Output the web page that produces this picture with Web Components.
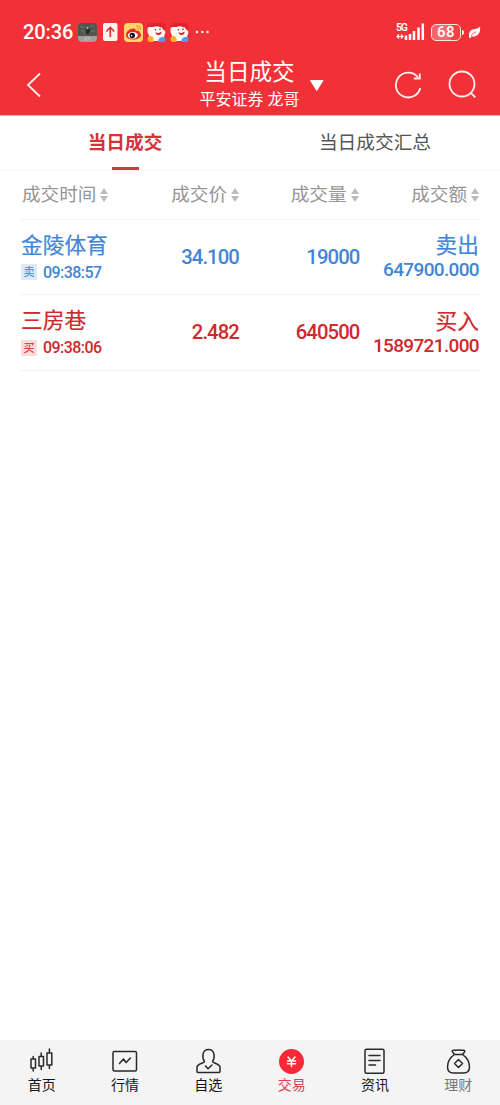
<!DOCTYPE html>
<html lang="zh-CN">
<head>
<meta charset="utf-8">
<meta name="viewport" content="width=device-width, initial-scale=1">
<title>当日成交</title>
<style>
    body {
        margin: 0;
        background: #fff;
        font-family: Roboto, "Noto Sans CJK SC", sans-serif;
        --brand: #f23038;
        --buy: #d0282d;
        --sell: #4285d6;
    }
</style>
</head>
<body>
<trade-app></trade-app>

<script>
class StatusBar extends HTMLElement {
    connectedCallback() {
        this.attachShadow({ mode: 'open' }).innerHTML = `
        <style>
            :host {
                display: flex;
                align-items: center;
                box-sizing: border-box;
                height: 55px;
                padding: 9px 19px 0 23px;
                color: #fff;
            }
            time { font: 500 20px/24px Roboto, sans-serif; width: 55px; letter-spacing: -.1px; white-space: nowrap; }
            .apps { display: flex; align-items: center; gap: 4px; flex: 1; }
            svg { display: block; flex: none; }
            .signal { margin-right: 6px; }
            .battery {
                display: flex;
                align-items: center;
                justify-content: center;
                box-sizing: border-box;
                width: 30px;
                height: 17px;
                border: 1.5px solid #ffe5df;
                border-radius: 5px;
                background: linear-gradient(90deg, #f5676c 68%, #f34047 68%);
                font: 500 15px/15px Roboto, sans-serif;
                letter-spacing: .5px;
            }
            .nub { width: 2px; height: 5px; margin: 0 4px 0 1px; border-radius: 0 2px 2px 0; background: #ffe5df; }
        </style>
        <time>20:36</time>
        <div class="apps">
            <svg width="19" height="19" viewBox="0 0 19 19">
                <rect width="19" height="19" rx="4" fill="#4f5650"/>
                <path d="M0 13h19v2a4 4 0 0 1-4 4H4a4 4 0 0 1-4-4z" fill="#a3a09a"/>
                <path d="M2 4h4M12 3h4M3 8h3M13 8h4M5 11h2" stroke="#66705f" stroke-width="1.5"/>
                <path d="M9.5 4v7M8 7h4" stroke="#252928" stroke-width="3"/>
                <circle cx="9.5" cy="5" r="1.2" fill="#aaa"/>
                <path d="M8 14v4M11 14v2" stroke="#d2ceca"/>
            </svg>
            <svg width="19" height="19" viewBox="0 0 19 19">
                <rect x="2" y="0" width="14.500" height="18" rx="2" fill="#fff3ee"/>
                <path d="M9.300 14V4.500M5.300 8.500l4-4 4 4" fill="none" stroke="#d8323a" stroke-width="1.7"/>
            </svg>
            <svg width="19" height="19" viewBox="0 0 19 19">
                <rect width="19" height="19" rx="4" fill="#ffd66c"/>
                <path d="M2 12c0-4 5-7 8-6.500 2 .3 1.300 2 1.800 2.200 1 .1 3.500-.4 3.700 1.300.1.800 1.500 1.300 1.500 3 0 3-4 4.500-7.500 4.500S2 15.500 2 12z" fill="#df2d23"/>
                <ellipse cx="8.800" cy="12.300" rx="5" ry="3.400" fill="#fff"/>
                <circle cx="8.300" cy="12.500" r="2.700" fill="#171717"/>
                <circle cx="7.600" cy="12.800" r=".8" fill="#fff"/>
                <path d="M12 3c3-.8 5 1.500 4.300 4M12.500 5.300c1.500-.3 2 .4 1.700 1.500" fill="none" stroke="#f29a2d" stroke-width="1.200"/>
            </svg>
            <svg id="joy" width="19" height="19" viewBox="0 0 19 19">
                <rect width="19" height="19" rx="4" fill="#e9222e"/>
                <path d="M.5 5c2-2 4.500 0 6.500-1.500 4-2 8 0 9 3 1.500.5 2.500 1.500 2.500 3L17 14l-1 4H3l-1-5L.5 9z" fill="#fff8f3"/>
                <path d="M5 2.500c3-2.500 7-2.500 10 0L14 4.500C11 3 8 3 6 4z" fill="#e51d2b"/>
                <path d="M8.500 9c2 1.500 4 1 6-.5.5 2.500-1.500 4-3.500 3.500-1.500 0-2.500-1.500-2.500-3z" fill="#d72a32"/>
                <circle cx="8.500" cy="6.800" r=".8" fill="#333"/><circle cx="13" cy="6.300" r=".8" fill="#333"/>
                <path d="M.5 14.500c2-2.500 5-1.500 6 .5v4H3.500a3 3 0 0 1-3-2z" fill="#ffae31"/>
                <path d="M11.500 19c-1-3.500 2.500-6 7-4.500V16a3 3 0 0 1-3 3z" fill="#569be8"/>
            </svg>
            <svg width="18" height="5" viewBox="0 0 18 5" fill="#ffe9e5">
                <circle cx="4" cy="2" r="1.300"/><circle cx="9.300" cy="2" r="1.300"/><circle cx="14.500" cy="2" r="1.300"/>
            </svg>
        </div>
        <svg class="signal" width="29" height="20" viewBox="0 0 29 20">
            <text x="0" y="8.500" font-family="Roboto, sans-serif" font-size="10.500" font-weight="600" fill="#fff" textLength="12">5G</text>
            <path d="M1 14.500h6M3 12.500l-2 2 2 2M5 12.500l2 2-2 2" fill="none" stroke="#fff" stroke-width="1.200"/>
            <path d="M10 13.500v4.500M14 12v6M18 9v9M22.500 5.500V18M26.800 1.500V18" stroke="#fff" stroke-width="2.500"/>
        </svg>
        <div class="battery">68</div><div class="nub"></div>
        <svg width="13" height="13" viewBox="0 0 13 13">
            <path d="M1 11C.5 5 3 3.500 7 3c2-.3 3.500-1 5-2.500C13 6 10 11.500 3.500 10.500L1.500 12.500z" fill="#fff"/>
            <path d="M3 10c1-2 3-3.500 5-4.200" fill="none" stroke="#f23038" stroke-width=".8"/>
        </svg>`;

        // Two notifications come from the same shopping app
        const joy = this.shadowRoot.getElementById('joy');
        const copy = joy.cloneNode(true);
        copy.removeAttribute('id');
        joy.after(copy);
    }
}

class TitleBar extends HTMLElement {
    connectedCallback() {
        this.attachShadow({ mode: 'open' }).innerHTML = `
        <style>
            :host {
                display: grid;
                grid-template-columns: 1fr 102px 1fr;
                align-items: start;
                box-sizing: border-box;
                height: 60px;
                color: #fff;
            }
            .center { text-align: center; padding-top: 2px; margin-left: -1px; }
            ::slotted([slot="title"]) { font-size: 22.600px; line-height: 32px; }
            ::slotted([slot="account"]) { font-size: 16px; line-height: 22px; white-space: pre; }
            svg { display: block; fill: none; stroke: #fff2ed; stroke-width: 1.8; }
            .back { margin: 17px 0 0 26px; }
            .right { display: flex; align-items: flex-start; }
            .caret { fill: #fff; stroke: none; margin: 24px 0 0 8px; }
            .refresh { margin: 15px 0 0 70px; }
            .search { margin: 15px 0 0 25px; }
        </style>
        <svg class="back" width="16" height="26" viewBox="0 0 16 26"><path d="M14 1.500 2 13l12 11.500"/></svg>
        <div class="center"><slot name="title"></slot><slot name="account"></slot></div>
        <div class="right">
            <svg class="caret" width="15" height="13" viewBox="0 0 15 13"><path d="M1.500 1.500h12.500L7.800 11.500z" stroke="#fff" stroke-width="1" stroke-linejoin="round"/></svg>
            <svg class="refresh" width="29" height="29" viewBox="0 0 29 29">
                <path d="M26.300 18a12.400 12.400 0 1 1-2.200-10.500"/>
                <path d="M25.800 3.500v5h-6"/>
            </svg>
            <svg class="search" width="29" height="29" viewBox="0 0 29 29"><circle cx="14" cy="14" r="12.500"/><path d="m22.800 22.800 4.500 4.500"/></svg>
        </div>`;
    }
}

class TabItem extends HTMLElement {
    connectedCallback() {
        this.attachShadow({ mode: 'open' }).innerHTML = `
        <style>
            :host {
                display: flex;
                flex-direction: column;
                align-items: center;
                justify-content: space-between;
                flex: 1;
                color: #555;
                font-size: 18.700px;
                line-height: 54px;
            }
            :host([active]) { color: #d2343a; font-weight: 600; }
            .label { height: 51px; }
            .bar { width: 27px; height: 3px; }
            :host([active]) .bar { background: #cd3a40; }
        </style>
        <div class="label"><slot></slot></div>
        <div class="bar"></div>`;
    }
}

class SortHeader extends HTMLElement {
    connectedCallback() {
        this.attachShadow({ mode: 'open' }).innerHTML = `
        <style>
            :host {
                display: flex;
                align-items: center;
                justify-content: flex-end;
                gap: 4px;
                color: #959595;
                font-size: 18.600px;
                line-height: 48px;
                white-space: nowrap;
            }
            :host([start]) { justify-content: flex-start; }
            svg { display: block; margin-top: -1px; }
        </style>
        <slot></slot>
        <svg width="8" height="14" viewBox="0 0 8 14" fill="#bcbcbc"><path d="M4 0l4 6H0zM4 14l4-6H0z"/></svg>`;
    }
}

class TradeRow extends HTMLElement {
    connectedCallback() {
        const get = (name) => this.getAttribute(name) || '';
        const sell = get('side') === 'sell';

        this.attachShadow({ mode: 'open' }).innerHTML = `
        <style>
            :host {
                display: grid;
                grid-template-columns: 130px 88px 120.500px 1fr;
                box-sizing: border-box;
                height: 75.500px;
                margin: 0 20px;
                padding: 0 1px;
                border-bottom: 1px solid #f3f3f3;
                color: var(--${sell ? 'sell' : 'buy'});
                white-space: nowrap;
            }
            .name { font-size: 21.700px; line-height: 32px; margin-top: 10px; -webkit-text-stroke: .2px; }
            .meta { display: flex; align-items: center; gap: 6px; height: 21px; }
            .tag {
                width: 16px;
                height: 16px;
                font-size: 11.500px;
                line-height: 16px;
                text-align: center;
                background: ${sell ? '#dcebfb' : '#fbdcdc'};
            }
            .time { font-size: 16px; font-weight: 500; letter-spacing: -.550px; }
            .num { font-size: 20.300px; font-weight: 500; letter-spacing: -.900px; line-height: 74px; text-align: right; }
            .total { text-align: right; }
            .side { font-size: 21.700px; line-height: 28px; margin-top: 12.500px; -webkit-text-stroke: .2px; }
            .amount { font-size: 19px; font-weight: 500; letter-spacing: -.650px; line-height: 20.500px; margin-left: -20px; }
        </style>
        <div>
            <div class="name">${get('name')}</div>
            <div class="meta"><span class="tag">${sell ? '卖' : '买'}</span><span class="time">${get('time')}</span></div>
        </div>
        <div class="num">${get('price')}</div>
        <div class="num">${get('volume')}</div>
        <div class="total">
            <div class="side">${sell ? '卖出' : '买入'}</div>
            <div class="amount">${get('amount')}</div>
        </div>`;
    }
}

const NAV_ICONS = {
    home: '<path d="M3 11h4.500v9H3zM3 11h4.500M5.200 8.500V11M5.200 20v3M11 8.500h4.500V18H11zM13.200 5v3.500M13.200 18v3.500M19 5h4.800v12H19zM21.400 1v4M21.400 17v3.500"/>',
    market: '<rect x="2" y="3.500" width="23.500" height="19.500" rx="1.500"/><path d="m8.500 15.500 4-4.500 2.500 3.500 4.500-4.500"/>',
    watch: '<path d="M9.500 13.500C7.800 11.500 7.500 9 8 6.500 8.500 3 10.500 1.500 13.500 1.500S18.500 3 19 6.500c.5 2.500.2 5-1.500 7 0 1.500 7.500 2.300 7.500 5.500v4.500c0 .700-.3 1-1 1H3c-.7 0-1-.3-1-1V19c0-3.200 7.500-4 7.500-5.500z"/><path d="m10.500 18 2.500 2.800 4-3.800"/>',
    trade: '<circle cx="13.500" cy="13.500" r="12.500" fill="#fa2938" stroke="none"/><path d="m10 9 3.500 4L17 9M9.500 13h8M9.500 15.800h8M13.500 13v5.500" stroke="#fff"/>',
    news: '<rect x="4" y="1.300" width="19" height="24" rx="1.500"/><path d="M8 7.500h11M8 12.500h11M8 17h6.500"/>',
    wealth: '<path d="M9.500 6.500 7.500 4c-.8-1.300.2-1.800 1.300-1.700 1.700.2 2.700-.3 4.700-.3s3 .5 4.700.3c1.100-.1 2.100.4 1.300 1.700l-2 2.500zM9.500 6.500C5 9.500 2.500 14 2.500 19c0 4 2 6 6 6h10c4 0 6-2 6-6 0-5-2.500-9.500-7-12.500z"/><path d="m13.500 11.500 4 4-4 4-4-4z"/>'
};

class NavItem extends HTMLElement {
    connectedCallback() {
        this.attachShadow({ mode: 'open' }).innerHTML = `
        <style>
            :host {
                display: flex;
                flex-direction: column;
                align-items: center;
                flex: 1;
                padding-top: 8px;
                color: #161616;
                font-size: 14px;
                line-height: 20px;
            }
            :host([active]) { color: #df3f50; }
            :host([muted]) { color: #777; }
            svg {
                display: block;
                fill: none;
                stroke: #292929;
                stroke-width: 1.500;
                stroke-linejoin: round;
                stroke-linecap: round;
            }
        </style>
        <svg width="27" height="27" viewBox="0 0 27 27">${NAV_ICONS[this.getAttribute('icon')]}</svg>
        <slot></slot>`;
    }
}

class TradeApp extends HTMLElement {
    connectedCallback() {
        this.attachShadow({ mode: 'open' }).innerHTML = `
        <style>
            :host { display: flex; flex-direction: column; height: 1105px; }
            header { background: var(--brand); border-bottom: 1px solid #ffaaaa; }
            .tabs { display: flex; height: 54px; border-bottom: 1px solid #f5f5f5; }
            .columns {
                display: grid;
                grid-template-columns: 129.500px 87.500px 119.500px 1fr;
                height: 47.500px;
                margin: 0 20px;
                padding: 0 1px 0 2px;
                border-bottom: 1px solid #f3f3f3;
            }
            main { flex: 1; }
            nav { display: flex; height: 65px; background: #f4f4f4; }
        </style>
        <header>
            <status-bar></status-bar>
            <title-bar>
                <div slot="title">当日成交</div>
                <div slot="account">平安证券 龙哥</div>
            </title-bar>
        </header>
        <div class="tabs">
            <tab-item active>当日成交</tab-item>
            <tab-item>当日成交汇总</tab-item>
        </div>
        <div class="columns">
            <sort-header start>成交时间</sort-header>
            <sort-header>成交价</sort-header>
            <sort-header>成交量</sort-header>
            <sort-header>成交额</sort-header>
        </div>
        <main>
            <trade-row side="sell" name="金陵体育" time="09:38:57" price="34.100" volume="19000" amount="647900.000"></trade-row>
            <trade-row side="buy" name="三房巷" time="09:38:06" price="2.482" volume="640500" amount="1589721.000"></trade-row>
        </main>
        <nav>
            <nav-item icon="home">首页</nav-item>
            <nav-item icon="market">行情</nav-item>
            <nav-item icon="watch">自选</nav-item>
            <nav-item icon="trade" active>交易</nav-item>
            <nav-item icon="news">资讯</nav-item>
            <nav-item icon="wealth" muted>理财</nav-item>
        </nav>`;
    }
}

customElements.define('status-bar', StatusBar);
customElements.define('title-bar', TitleBar);
customElements.define('tab-item', TabItem);
customElements.define('sort-header', SortHeader);
customElements.define('trade-row', TradeRow);
customElements.define('nav-item', NavItem);
customElements.define('trade-app', TradeApp);
</script>
</body>
</html>
